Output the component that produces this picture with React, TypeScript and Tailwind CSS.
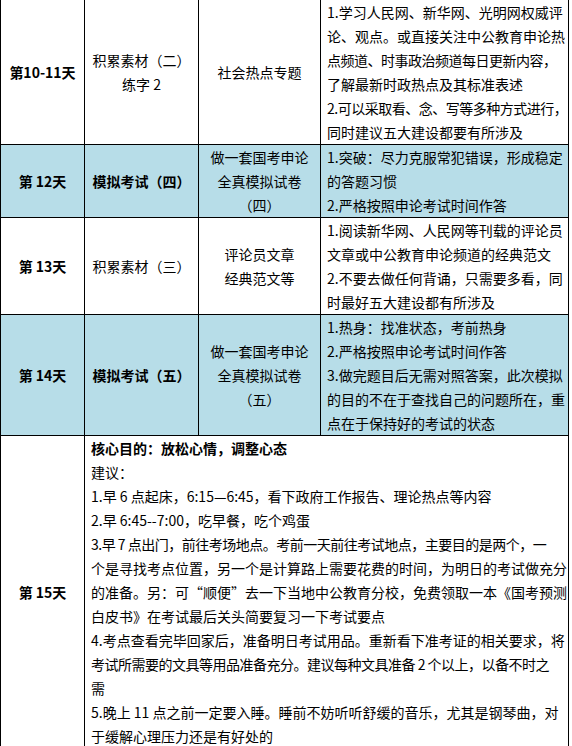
import React from 'react';

interface PlanRow {
  day: string;
  topic: string[];
  topicBold?: boolean;
  material: string[];
  notes: string[];
  blue?: boolean;
}

const rows: PlanRow[] = [
  {
    day: '第10-11天',
    topic: ['积累素材（二）', '练字 2'],
    material: ['社会热点专题'],
    notes: [
      '1.学习人民网、新华网、光明网权威评',
      '论、观点。或直接关注中公教育申论热',
      '点频道、时事政治频道每日更新内容，',
      '了解最新时政热点及其标准表述',
      '2.可以采取看、念、写等多种方式进行，',
      '同时建议五大建设都要有所涉及',
    ],
  },
  {
    day: '第 12天',
    topic: ['模拟考试（四）'],
    topicBold: true,
    material: ['做一套国考申论', '全真模拟试卷', '（四）'],
    notes: ['1.突破：尽力克服常犯错误，形成稳定', '的答题习惯', '2.严格按照申论考试时间作答'],
    blue: true,
  },
  {
    day: '第 13天',
    topic: ['积累素材（三）'],
    material: ['评论员文章', '经典范文等'],
    notes: [
      '1.阅读新华网、人民网等刊载的评论员',
      '文章或中公教育申论频道的经典范文',
      '2.不要去做任何背诵，只需要多看，同',
      '时最好五大建设都有所涉及',
    ],
  },
  {
    day: '第 14天',
    topic: ['模拟考试（五）'],
    topicBold: true,
    material: ['做一套国考申论', '全真模拟试卷', '（五）'],
    notes: [
      '1.热身：找准状态，考前热身',
      '2.严格按照申论考试时间作答',
      '3.做完题目后无需对照答案，此次模拟',
      '的目的不在于查找自己的问题所在，重',
      '点在于保持好的考试的状态',
    ],
    blue: true,
  },
];

const lastDay = [
  '建议：',
  '1.早 6 点起床，6:15—6:45，看下政府工作报告、理论热点等内容',
  '2.早 6:45--7:00，吃早餐，吃个鸡蛋',
  '3.早 7 点出门，前往考场地点。考前一天前往考试地点，主要目的是两个，一',
  '个是寻找考点位置，另一个是计算路上需要花费的时间，为明日的考试做充分',
  '的准备。另：可“顺便”去一下当地中公教育分校，免费领取一本《国考预测',
  '白皮书》在考试最后关头简要复习一下考试要点',
  '4.考点查看完毕回家后，准备明日考试用品。重新看下准考证的相关要求，将',
  '考试所需要的文具等用品准备充分。建议每种文具准备 2 个以上，以备不时之',
  '需',
  '5.晚上 11 点之前一定要入睡。睡前不妨听听舒缓的音乐，尤其是钢琴曲，对',
  '于缓解心理压力还是有好处的',
];

// lines that are a touch too wide for the notes column
const tight = new Set([
  '2.可以采取看、念、写等多种方式进行，',
  '点频道、时事政治频道每日更新内容，',
  '3.早 7 点出门，前往考场地点。考前一天前往考试地点，主要目的是两个，一',
  '考试所需要的文具等用品准备充分。建议每种文具准备 2 个以上，以备不时之',
]);

const Lines: React.FC<{ lines: string[] }> = ({ lines }) => (
  <>
    {lines.map((l, i) => (
      <div key={i} className={`whitespace-nowrap ${tight.has(l) ? 'tracking-[-0.5px]' : ''}`}>
        {l}
      </div>
    ))}
  </>
);

const cell = 'border border-black p-0 align-middle';

export default function App() {
  return (
    <div
      className="bg-white text-black text-[14px] leading-[24px] min-h-[746px]"
      style={{ fontFamily: '"Noto Sans CJK SC", "Noto Sans", sans-serif' }}
    >
      <table className="table-fixed border-collapse w-[568px]">
        <colgroup>
          <col className="w-[84px]" />
          <col className="w-[114px]" />
          <col className="w-[122px]" />
          <col className="w-[248px]" />
        </colgroup>
        <tbody>
          {rows.map((r, i) => (
            <tr key={i} className={r.blue ? 'bg-[#b7dde8]' : 'bg-white'}>
              <td className={`${cell} text-center font-bold ${i === 0 ? 'border-t-0' : ''}`}>
                {r.day}
              </td>
              <td
                className={`${cell} text-center ${r.topicBold ? 'font-bold' : ''} ${
                  i === 0 ? 'border-t-0' : ''
                }`}
              >
                <Lines lines={r.topic} />
              </td>
              <td className={`${cell} text-center ${i === 0 ? 'border-t-0' : ''}`}>
                <Lines lines={r.material} />
              </td>
              <td className={`${cell} pl-[6px] ${i === 0 ? 'border-t-0' : ''}`}>
                <Lines lines={r.notes} />
              </td>
            </tr>
          ))}
          <tr className="bg-white">
            <td className={`${cell} text-center font-bold`}>第 15天</td>
            <td colSpan={3} className={`${cell} pl-[6px]`}>
              <div className="font-bold whitespace-nowrap">核心目的：放松心情，调整心态</div>
              <Lines lines={lastDay} />
            </td>
          </tr>
        </tbody>
      </table>
    </div>
  );
}
